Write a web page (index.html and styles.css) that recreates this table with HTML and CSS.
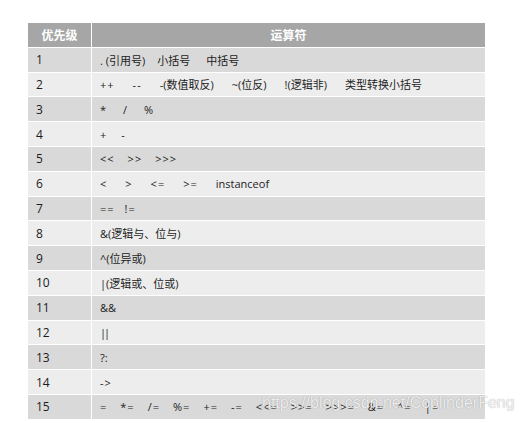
FILE: index.html
```html
<!DOCTYPE html>
<html>
<head>
<meta charset="utf-8">
<link rel="stylesheet" href="styles.css">
</head>
<body>
<div class="page">
  <div class="table">
    <div class="hd c1">优先级</div><div class="hd c2">运算符</div>

    <div class="c1 d">1</div><div class="c2 d ops g1"><span>. (引用号)</span><span>小括号</span><span class="m16">中括号</span></div>
    <div class="c1 l">2</div><div class="c2 l ops g2"><span class="sp">++</span><span class="sp">--</span><span>-(数值取反)</span><span>~(位反)</span><span>!(逻辑非)</span><span>类型转换小括号</span></div>
    <div class="c1 d">3</div><div class="c2 d ops g3"><span>*</span><span>/</span><span>%</span></div>
    <div class="c1 l">4</div><div class="c2 l ops g4"><span>+</span><span>-</span></div>
    <div class="c1 d">5</div><div class="c2 d ops g5"><span class="sp">&lt;&lt;</span><span class="sp">&gt;&gt;</span><span class="sp">&gt;&gt;&gt;</span></div>
    <div class="c1 l">6</div><div class="c2 l ops g6"><span class="sp">&lt;</span><span class="sp">&gt;</span><span class="sp">&lt;=</span><span class="sp">&gt;=</span><span>instanceof</span></div>
    <div class="c1 d">7</div><div class="c2 d ops g7"><span class="sp">==</span><span class="sp">!=</span></div>
    <div class="c1 l">8</div><div class="c2 l ops"><span>&amp;(逻辑与、位与)</span></div>
    <div class="c1 d">9</div><div class="c2 d ops"><span>^(位异或)</span></div>
    <div class="c1 l">10</div><div class="c2 l ops"><span><span class="tight">|</span>(逻辑或、位或)</span></div>
    <div class="c1 d">11</div><div class="c2 d ops"><span>&amp;&amp;</span></div>
    <div class="c1 l">12</div><div class="c2 l ops"><span class="tight">||</span></div>
    <div class="c1 d">13</div><div class="c2 d ops"><span>?:</span></div>
    <div class="c1 l">14</div><div class="c2 l ops"><span class="sp">-&gt;</span></div>
    <div class="c1 d">15</div><div class="c2 d ops g15"><span class="sp">=</span><span class="sp">*=</span><span class="sp">/=</span><span class="sp">%=</span><span class="sp">+=</span><span class="sp">-=</span><span class="sp">&lt;&lt;=</span><span class="sp">&gt;&gt;=</span><span class="sp">&gt;&gt;&gt;=</span><span class="sp">&amp;=</span><span class="sp">^=</span><span class="sp">|=</span></div>
  </div>
  <div class="watermark">https://blog.csdn.net/CoplinderFeng</div>
</div>
</body>
</html>
```
FILE: styles.css
```css
html, body {
  margin: 0;
  padding: 0;
  background: #ffffff;
}
.page {
  position: relative;
  width: 523px;
  height: 423px;
  padding: 23px 0 0 28px;
  box-sizing: border-box;
  font-family: "Open Sans", "Noto Sans CJK SC", sans-serif;
  font-size: 11px;
  color: #1c1c1c;
}
.table {
  width: 457px;
  display: grid;
  grid-template-columns: 63px 393px;
  grid-auto-rows: 23.8px;
  column-gap: 1px;
  row-gap: 1px;
  background: #ffffff;
}
.table > div {
  display: flex;
  align-items: center;
  white-space: nowrap;
}
.hd {
  background: #a6a6a6;
  color: #ffffff;
  font-weight: bold;
  font-size: 12px;
  justify-content: center;
}
.c1:not(.hd) {
  padding-left: 8px;
  font-size: 12px;
}
.c2:not(.hd) {
  padding-left: 8px;
}
.d { background: #d9d9d9; }
.l { background: #ededed; }
.ops { gap: 12px; }
.sp { letter-spacing: 1px; }
.tight { letter-spacing: -2px; margin-right: 2px; }
.g1 { gap: 12px; }
.g1 .m16 { margin-left: 4px; }
.g2 { gap: 18px; }
.g3 { gap: 17px; }
.g4 { gap: 15px; }
.g5 { gap: 13px; }
.g6 { gap: 18px; }
.g7 { gap: 10px; }
.g15 { gap: 13px; }
.watermark {
  position: absolute;
  left: 262px;
  top: 394px;
  font-family: "Liberation Sans", Arial, sans-serif;
  font-size: 16px;
  color: rgba(246, 246, 246, 0.92);
  text-shadow: 0 0 1px rgba(0, 0, 0, 0.35);
  white-space: nowrap;
}
```
